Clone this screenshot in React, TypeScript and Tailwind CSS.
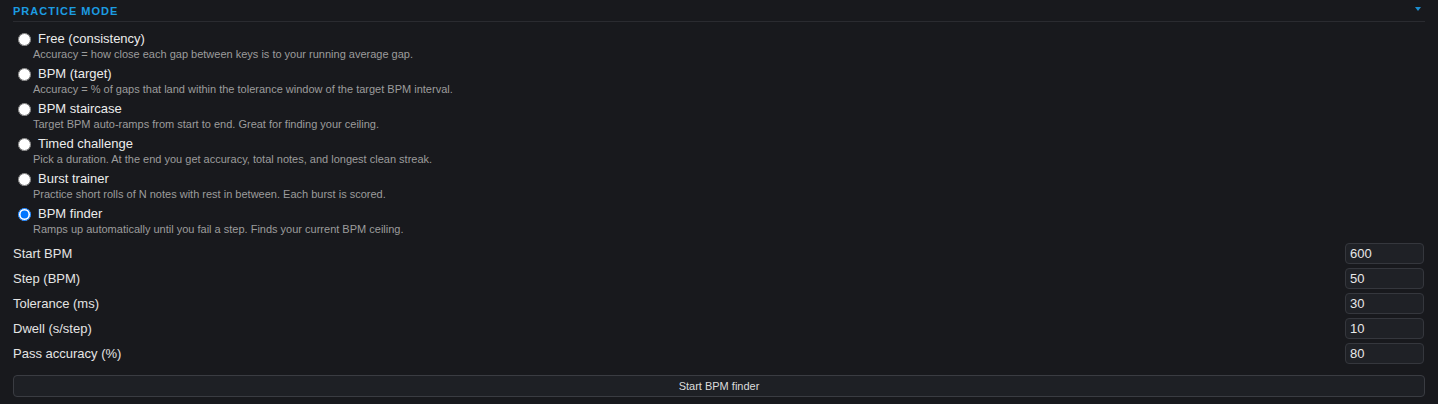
import React, { useState } from "react";

const modes = [
  {
    id: "free",
    label: "Free (consistency)",
    desc: "Accuracy = how close each gap between keys is to your running average gap.",
  },
  {
    id: "target",
    label: "BPM (target)",
    desc: "Accuracy = % of gaps that land within the tolerance window of the target BPM interval.",
  },
  {
    id: "staircase",
    label: "BPM staircase",
    desc: "Target BPM auto-ramps from start to end. Great for finding your ceiling.",
  },
  {
    id: "timed",
    label: "Timed challenge",
    desc: "Pick a duration. At the end you get accuracy, total notes, and longest clean streak.",
  },
  {
    id: "burst",
    label: "Burst trainer",
    desc: "Practice short rolls of N notes with rest in between. Each burst is scored.",
  },
  {
    id: "finder",
    label: "BPM finder",
    desc: "Ramps up automatically until you fail a step. Finds your current BPM ceiling.",
  },
];

const fields = [
  { key: "start", label: "Start BPM", value: "600" },
  { key: "step", label: "Step (BPM)", value: "50" },
  { key: "tol", label: "Tolerance (ms)", value: "30" },
  { key: "dwell", label: "Dwell (s/step)", value: "10" },
  { key: "pass", label: "Pass accuracy (%)", value: "80" },
];

export default function App() {
  const [mode, setMode] = useState("finder");
  const [values, setValues] = useState<Record<string, string>>(
    Object.fromEntries(fields.map((f) => [f.key, f.value]))
  );

  return (
    <div
      className="min-h-[404px] w-full bg-[#18191d] pl-[13px] pr-[13px] text-[#e4e4e4]"
      style={{ fontFamily: '"Liberation Sans", Arial, sans-serif' }}
    >
      {/* Header */}
      <div className="flex h-[22px] items-center justify-between border-b border-[#2a2b30] pt-[2px]">
        <span className="text-[11px] font-bold uppercase leading-none tracking-[1px] text-[#1c9ce2]">
          Practice mode
        </span>
        <svg className="mr-[4px] mb-[5px] h-[4px] w-[6px]" viewBox="0 0 6 4">
          <path d="M0 0h6L3 4z" fill="#1c8ed0" />
        </svg>
      </div>

      {/* Modes */}
      <div className="pt-[9px]">
        {modes.map((m) => (
          <label key={m.id} className="mb-[5px] block cursor-pointer">
            <div className="flex h-[16px] items-center">
              <input
                type="radio"
                name="mode"
                checked={mode === m.id}
                onChange={() => setMode(m.id)}
                className="ml-[5px] mr-[7px] h-[13px] w-[13px]"
              />
              <span className="text-[13px] leading-[16px] text-[#ececec]">
                {m.label}
              </span>
            </div>
            <div className="pl-[20px] text-[11px] leading-[14px] text-[#9c9c9c]">
              {m.desc}
            </div>
          </label>
        ))}
      </div>

      {/* Fields */}
      <div>
        {fields.map((f) => (
          <div key={f.key} className="flex h-[25px] items-center justify-between">
            <span className="text-[13px] text-[#e4e4e4]">{f.label}</span>
            <input
              type="text"
              value={values[f.key]}
              onChange={(e) =>
                setValues((prev) => ({ ...prev, [f.key]: e.target.value }))
              }
              className="mr-[1px] h-[21px] w-[79px] rounded-[4px] border border-[#35373d] bg-[#1f2126] px-[4px] text-[13px] text-[#e8e8e8] outline-none"
            />
          </div>
        ))}
      </div>

      <button
        type="button"
        className="mt-[9px] h-[22px] w-full rounded-[4px] border border-[#3a3c42] bg-[#1e2025] text-[11px] text-[#dcdcdc]"
      >
        Start BPM finder
      </button>
    </div>
  );
}
